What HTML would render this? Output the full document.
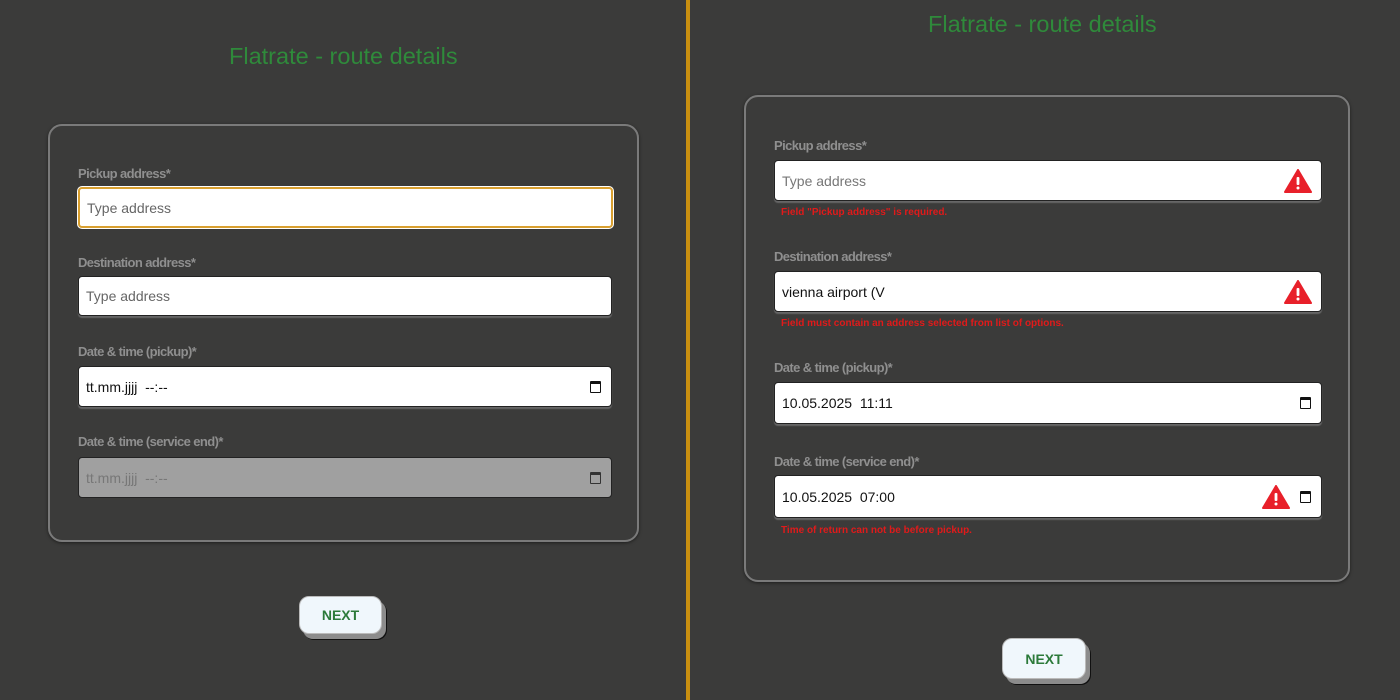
<!DOCTYPE html><html><head><meta charset="utf-8"><style>
*{box-sizing:border-box;margin:0;padding:0}
body{width:1400px;height:700px;overflow:hidden;background:#3b3b3a;font-family:"Liberation Sans",Arial,sans-serif;position:relative}
.a{position:absolute}
.title{color:#2f8a3b;font-size:23.5px;white-space:nowrap}
.card{border:2px solid #7a7a7a;border-radius:14px;box-shadow:0 1px 3px rgba(0,0,0,.5)}
.lbl{color:#8f8f8f;font-size:13px;font-weight:bold;letter-spacing:-0.6px}
.inp{background:#fff;border:1px solid #222;border-radius:4px;box-shadow:0 2px 1px #666;font-size:14px;color:#666;padding-left:7px;display:flex;align-items:center}
.dark{color:#111}
.err{color:#e01a1a;font-size:10px;font-weight:bold}
.cal{position:absolute;right:10px;top:50%;margin-top:-6px;width:11px;height:12px;border:1.5px solid #111;border-top-width:3px;border-radius:1px}
.warn{position:absolute;top:50%;margin-top:-12px}
.btn{background:#f0f7fc;border:1px solid #bbb;border-radius:10px;box-shadow:4px 5px 0 #8c8c8c,5px 6px 0 #111;color:#2c7a3a;font-weight:bold;font-size:14px;display:flex;align-items:center;justify-content:center}
</style></head><body>
<div class="a" style="left:686px;top:0;width:4px;height:700px;background:#c98f10"></div>

<div class="a title" style="left:229px;top:43px">Flatrate - route details</div>
<div class="a card" style="left:48px;top:124px;width:591px;height:418px"></div>
<div class="a lbl" style="left:78px;top:166px">Pickup address*</div>
<div class="a inp" style="left:78px;top:187px;width:535px;height:41px;border:2px solid #d9a030;box-shadow:0 0 0 1px #fff">Type address</div>
<div class="a lbl" style="left:78px;top:255px">Destination address*</div>
<div class="a inp" style="left:78px;top:276px;width:534px;height:40px">Type address</div>
<div class="a lbl" style="left:78px;top:344px">Date &amp; time (pickup)*</div>
<div class="a inp dark" style="left:78px;top:366px;width:534px;height:41px">tt.mm.jjjj&nbsp; --:--<span class="cal"></span></div>
<div class="a lbl" style="left:78px;top:434px">Date &amp; time (service end)*</div>
<div class="a inp" style="left:78px;top:457px;width:534px;height:41px;background:#a0a0a0;color:#777;box-shadow:none">tt.mm.jjjj&nbsp; --:--<span class="cal" style="border-color:#333"></span></div>
<div class="a btn" style="left:299px;top:596px;width:83px;height:38px">NEXT</div>

<div class="a title" style="left:928px;top:11px">Flatrate - route details</div>
<div class="a card" style="left:744px;top:95px;width:606px;height:487px"></div>
<div class="a lbl" style="left:774px;top:138px">Pickup address*</div>
<div class="a inp" style="left:774px;top:160px;width:548px;height:41px;color:#777">Type address
<svg class="warn" style="right:9px" width="28" height="24" viewBox="0 0 28 24"><path d="M14 1L27 23H1Z" fill="#e8202a" stroke="#e8202a" stroke-linejoin="round" stroke-width="2"/><rect x="12.6" y="8" width="2.8" height="8" rx="1" fill="#fff"/><circle cx="14" cy="19" r="1.5" fill="#fff"/></svg></div>
<div class="a err" style="left:781px;top:207px">Field "Pickup address" is required.</div>
<div class="a lbl" style="left:774px;top:249px">Destination address*</div>
<div class="a inp dark" style="left:774px;top:271px;width:548px;height:41px">vienna airport (V
<svg class="warn" style="right:9px" width="28" height="24" viewBox="0 0 28 24"><path d="M14 1L27 23H1Z" fill="#e8202a" stroke="#e8202a" stroke-linejoin="round" stroke-width="2"/><rect x="12.6" y="8" width="2.8" height="8" rx="1" fill="#fff"/><circle cx="14" cy="19" r="1.5" fill="#fff"/></svg></div>
<div class="a err" style="left:781px;top:318px">Field must contain an address selected from list of options.</div>
<div class="a lbl" style="left:774px;top:360px">Date &amp; time (pickup)*</div>
<div class="a inp dark" style="left:774px;top:382px;width:548px;height:42px">10.05.2025&nbsp; 11:11<span class="cal"></span></div>
<div class="a lbl" style="left:774px;top:454px">Date &amp; time (service end)*</div>
<div class="a inp dark" style="left:774px;top:475px;width:548px;height:43px">10.05.2025&nbsp; 07:00<span class="cal"></span>
<svg class="warn" style="right:31px" width="28" height="24" viewBox="0 0 28 24"><path d="M14 1L27 23H1Z" fill="#e8202a" stroke="#e8202a" stroke-linejoin="round" stroke-width="2"/><rect x="12.6" y="8" width="2.8" height="8" rx="1" fill="#fff"/><circle cx="14" cy="19" r="1.5" fill="#fff"/></svg></div>
<div class="a err" style="left:781px;top:525px">Time of return can not be before pickup.</div>
<div class="a btn" style="left:1002px;top:638px;width:84px;height:41px">NEXT</div>
</body></html>
